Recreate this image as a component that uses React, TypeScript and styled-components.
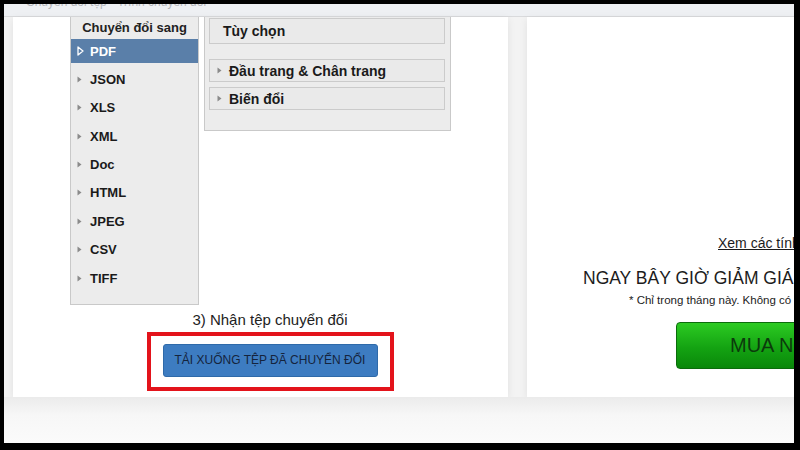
import React from "react";
import styled, { createGlobalStyle } from "styled-components";

const Global = createGlobalStyle`
  html, body { margin: 0; padding: 0; background: #000; }
  * { box-sizing: border-box; }
`;

const Frame = styled.div`
  width: 800px;
  height: 450px;
  background: #000;
  padding: 4px 6px 7px 4px;
  font-family: "Liberation Sans", Arial, sans-serif;
  color: #1c1c1c;
`;

const Screen = styled.div`
  width: 100%;
  height: 100%;
  background: #f3f3f3;
  display: flex;
  flex-direction: column;
  overflow: hidden;
`;

const TopStrip = styled.div`
  height: 13px;
  flex: none;
  background: #eef0f3;
  border-bottom: 1px solid #d9dadc;
  overflow: hidden;
  padding-left: 22px;
`;

const StripText = styled.div`
  font-size: 12px;
  line-height: 12px;
  margin-top: -8px;
  color: #b4b6ba;
  white-space: nowrap;
`;

const Cards = styled.div`
  display: flex;
  height: 380px;
  flex: none;
  padding-left: 9px;
  gap: 19px;
`;

const Below = styled.div`
  flex: 1;
  background: linear-gradient(#ebebeb, #f7f7f7 40%, #fbfbfb);
`;

const LeftCard = styled.div`
  width: 495px;
  background: #fff;
  box-shadow: 0 2px 8px rgba(0, 0, 0, 0.08);
  display: flex;
  flex-direction: column;
`;

const TopRow = styled.div`
  display: flex;
  align-items: flex-start;
  gap: 5px;
  padding-left: 57px;
`;

const Menu = styled.div`
  width: 129px;
  background: #ececec;
  border: 1px solid #c9c9c9;
  border-top: none;
  padding-bottom: 9px;
`;

const MenuHeader = styled.div`
  height: 22px;
  line-height: 22px;
  text-align: center;
  font-weight: bold;
  font-size: 13px;
  color: #222;
`;

const MenuItem = styled.div<{ $active?: boolean }>`
  height: 24px;
  margin-bottom: 4.4px;
  display: flex;
  align-items: center;
  padding-left: 6px;
  font-weight: bold;
  font-size: 13px;
  background: ${(p) => (p.$active ? "#5a7fa9" : "transparent")};
  color: ${(p) => (p.$active ? "#fff" : "#1a1a1a")};
`;

const IconBox = styled.span<{ $w: number }>`
  width: ${(p) => p.$w}px;
  display: inline-flex;
  align-items: center;
  flex: none;
`;

const Options = styled.div`
  width: 247px;
  background: #ececec;
  border: 1px solid #c9c9c9;
  border-top: none;
  padding: 1px 5px 20px 4px;
`;

const OptionBox = styled.div<{ $h: number; $gap: number; $pad: number }>`
  height: ${(p) => p.$h}px;
  margin-bottom: ${(p) => p.$gap}px;
  border: 1px solid #cbcbcb;
  background: #eaeaea;
  display: flex;
  align-items: center;
  padding-left: ${(p) => p.$pad}px;
  font-weight: bold;
  font-size: 14px;
  color: #1a1a1a;
`;

const Bottom = styled.div`
  width: 400px;
  margin-left: 57px;
  display: flex;
  flex-direction: column;
  align-items: center;
`;

const StepLabel = styled.div`
  margin-top: 5px;
  font-size: 15px;
  line-height: 19px;
  color: #222;
`;

const Highlight = styled.div`
  margin-top: 3px;
  border: 4px solid #e3131b;
  padding: 8px 12px 10px 12px;
`;

const DownloadButton = styled.button`
  width: 215px;
  height: 33px;
  background: #3d7cc1;
  border: 1px solid #2f6aa9;
  border-radius: 3px;
  color: #15243d;
  font-family: "Liberation Sans", Arial, sans-serif;
  font-size: 12px;
  padding: 0;
  cursor: pointer;
`;

const RightCard = styled.div`
  flex: 1;
  background: #fff;
  box-shadow: 0 2px 8px rgba(0, 0, 0, 0.08);
  overflow: hidden;
  display: flex;
  flex-direction: column;
  align-items: flex-start;
  padding-top: 217px;
`;

const Line = styled.div<{ $indent: number; $top: number; $size: number; $lh: number }>`
  margin-left: ${(p) => p.$indent}px;
  margin-top: ${(p) => p.$top}px;
  font-size: ${(p) => p.$size}px;
  line-height: ${(p) => p.$lh}px;
  white-space: nowrap;
  color: #1c1c1c;
`;

const Link = styled.a`
  color: #1c1c1c;
  text-decoration: underline;
`;

const BuyButton = styled.button`
  margin-left: 149px;
  margin-top: 14px;
  width: 220px;
  height: 47px;
  flex: none;
  border: 1px solid #0b6c0b;
  border-radius: 4px;
  background: linear-gradient(#2ccb22, #14a312 55%, #0a880a);
  color: #0c3a0c;
  font-family: "Liberation Sans", Arial, sans-serif;
  font-size: 20px;
  text-align: left;
  padding-left: 53px;
`;

const SmallTri = () => (
  <svg width="5" height="7" viewBox="0 0 5 7">
    <path d="M0.5 0.5 L4.5 3.5 L0.5 6.5 Z" fill="#8a8a8a" />
  </svg>
);

const OutlineTri = () => (
  <svg width="7" height="10" viewBox="0 0 7 10">
    <path d="M1 1 L6 5 L1 9 Z" fill="none" stroke="#fff" strokeWidth="1.3" strokeLinejoin="round" />
  </svg>
);

const formats = ["PDF", "JSON", "XLS", "XML", "Doc", "HTML", "JPEG", "CSV", "TIFF"];

export default function App() {
  return (
    <>
      <Global />
      <Frame>
        <Screen>
          <TopStrip>
            <StripText>Chuyển đổi tệp · Trình chuyển đổi</StripText>
          </TopStrip>
          <Cards>
            <LeftCard>
              <TopRow>
                <Menu>
                  <MenuHeader>Chuyển đổi sang</MenuHeader>
                  {formats.map((f, i) => (
                    <MenuItem key={f} $active={i === 0}>
                      <IconBox $w={i === 0 ? 13 : 13}>
                        {i === 0 ? <OutlineTri /> : <SmallTri />}
                      </IconBox>
                      {f}
                    </MenuItem>
                  ))}
                </Menu>
                <Options>
                  <OptionBox $h={26} $gap={15} $pad={13}>
                    Tùy chọn
                  </OptionBox>
                  <OptionBox $h={23} $gap={5} $pad={7}>
                    <IconBox $w={12}>
                      <SmallTri />
                    </IconBox>
                    Đầu trang &amp; Chân trang
                  </OptionBox>
                  <OptionBox $h={23} $gap={0} $pad={7}>
                    <IconBox $w={12}>
                      <SmallTri />
                    </IconBox>
                    Biến đổi
                  </OptionBox>
                </Options>
              </TopRow>
              <Bottom>
                <StepLabel>3) Nhận tệp chuyển đổi</StepLabel>
                <Highlight>
                  <DownloadButton>TẢI XUỐNG TỆP ĐÃ CHUYỂN ĐỔI</DownloadButton>
                </Highlight>
              </Bottom>
            </LeftCard>
            <RightCard>
              <Line $indent={191} $top={0} $size={14} $lh={18}>
                <Link>Xem các tính năng</Link>
              </Line>
              <Line $indent={56} $top={15} $size={17.5} $lh={22}>
                NGAY BÂY GIỜ GIẢM GIÁ 30%
              </Line>
              <Line $indent={102} $top={3} $size={11.5} $lh={16}>
                * Chỉ trong tháng này. Không có phí ẩn.
              </Line>
              <BuyButton>MUA NGAY</BuyButton>
            </RightCard>
          </Cards>
          <Below />
        </Screen>
      </Frame>
    </>
  );
}
